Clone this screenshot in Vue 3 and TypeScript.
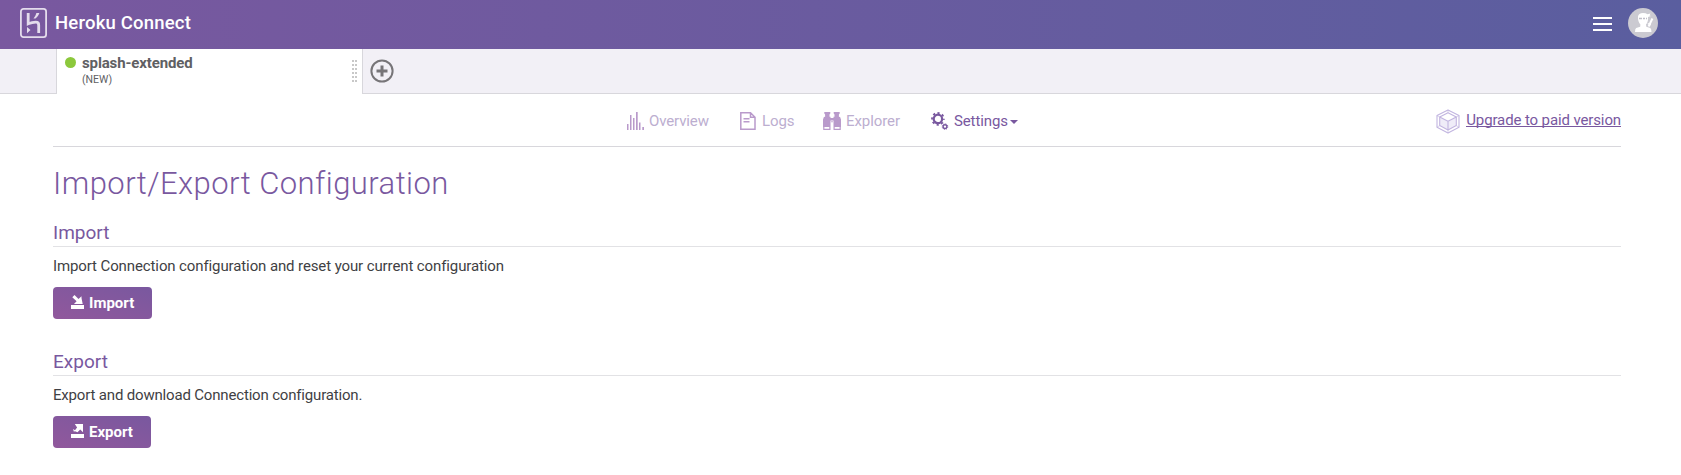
<script setup lang="ts">
interface Section {
  id: string
  title: string
  text: string
}

const sections: Section[] = [
  { id: 'import', title: 'Import', text: 'Import Connection configuration and reset your current configuration' },
  { id: 'export', title: 'Export', text: 'Export and download Connection configuration.' },
]
</script>

<template>
  <div class="page">
    <header class="topbar">
      <svg class="logo" width="27" height="30" viewBox="0 0 27 30">
        <rect x="0.9" y="0.9" width="25.2" height="28.2" rx="2.6" fill="none" stroke="#e4dcec" stroke-width="1.8" />
        <path d="M8.200 5v10.800c2.600-1.100 5.200-1.700 7.600-1.700 2.200 0 2.900 1 2.900 2.800v8.100" fill="none" stroke="#e4dcec" stroke-width="2.800" />
        <path d="M15.500 10.400c1.900-1.500 3.200-3.300 3.900-5.400h-3c-.5 1.800-1.400 3.600-2.900 5.400zM7 19v6.200l3.500-3.100z" fill="#e4dcec" />
      </svg>
      <span class="brand">Heroku Connect</span>
      <svg class="menu" width="19" height="14" viewBox="0 0 19 14" fill="#fff">
        <rect width="19" height="2" /><rect y="6" width="19" height="2" /><rect y="12" width="19" height="2" />
      </svg>
      <svg class="avatar" width="30" height="30" viewBox="0 0 30 30">
        <circle cx="15" cy="15" r="15" fill="#cbcad1" />
        <path fill="#fff" d="M10 8.500Q10.500 5 15 5q3 0 4.500 1.200L22.500 5.500l-1 2 1.500.5-3 1q.5 5-2 7.500l.3 2.200 4 1.300q1.200 1 1.200 4H7q0-3.500 1.200-4l4-1.300.2-2.200q-2.600-2.500-2.400-8z" />
        <path d="M11 10.500h8" stroke="#bfbdc8" stroke-width="1.600" stroke-dasharray="3 1 2 1" />
        <path d="M20.600 18.500l3.800-8" stroke="#fff" stroke-width="2" /><path d="M19.800 15.500l3 1.500" stroke="#fff" stroke-width="1.200" />
      </svg>
    </header>

    <div class="tabs">
      <div class="tab">
        <i class="status"></i>
        <div class="tab-label">
          <div class="tab-name">splash-extended</div>
          <div class="tab-note">(NEW)</div>
        </div>
        <div class="grip"><i v-for="n in 12" :key="n"></i></div>
      </div>
      <svg class="add" width="24" height="24" viewBox="0 0 24 24" fill="none" stroke="#777578">
        <circle cx="12" cy="12" r="10.600" stroke-width="2" />
        <path d="M12 6.500v11M6.500 12h11" stroke-width="3" />
      </svg>
    </div>

    <main class="content">
      <nav class="nav">
        <a class="item overview">
          <svg width="18" height="18" viewBox="0 0 18 18" fill="#b99acb">
            <path d="M0 12h1.500v6H0zM3 3h1.500v15H3zM6 6h1.500v12H6zM9 0h1.700v18H9zM12 10.500h1.500V18H12zM15.300 15h1.700v3h-1.700z" />
          </svg>
          <span>Overview</span>
        </a>
        <a class="item logs">
          <svg width="16" height="18" viewBox="0 0 16 18" fill="none" stroke="#b99acb" stroke-width="1.500">
            <path d="M.8.8h9.700L15 5.200v12H.8zM10.500.8v4.400H15M3.500 6.700h6M3.500 9.700h6" />
          </svg>
          <span>Logs</span>
        </a>
        <a class="item explorer">
          <svg width="18" height="18" viewBox="0 0 18 18" fill="#b99acb">
            <path d="M1.300 0h6v1.500l-.8 1v2.300H7.500V6h3V4.800h1V2.500l-.8-1V0h6v1.500l-.8 1v2.300l1.200.2.900 2.500V15h-7.500V8.500H7.500V15H0V7.500L.9 5l1.200-.2V2.500l-.8-1z" />
            <path d="M.8 15v2.300h6.100V15M11.100 15v2.300h6.100V15" fill="none" stroke="#b99acb" stroke-width="1.200" />
            <path d="M8.200 9.300h1.600v1H8.200z" />
          </svg>
          <span>Explorer</span>
        </a>
        <a class="item settings">
          <svg width="18" height="18" viewBox="0 0 18 18" fill="none" stroke="#79589f">
            <circle cx="6.900" cy="6.900" r="4.200" stroke-width="2.200" />
            <circle cx="6.900" cy="6.900" r="5.900" stroke-width="1.800" stroke-dasharray="2.200 2.434" stroke-dashoffset="1.100" />
            <circle cx="14" cy="14.600" r="1.900" stroke-width="1.400" />
            <circle cx="14" cy="14.600" r="2.800" stroke-width=".9" stroke-dasharray="1.100 1.100" />
          </svg>
          <span>Settings</span>
          <i class="caret"></i>
        </a>
        <a class="upgrade">
          <svg width="24" height="25" viewBox="0 0 24 25" fill="none" stroke="#c2b5e0" stroke-width="1.100" stroke-linejoin="round">
            <path d="M12 .9l11 5.700v11.600l-11 5.900-11-5.900V6.600z" />
            <path d="M3.700 8.100l8.300 4.100v8.700l-8.300-4.300zM20.300 8.100L12 12.200v8.700l8.300-4.300z" fill="#efecf8" />
            <path d="M3.700 8.100L12 3.800l8.300 4.300" />
            <path d="M12 .9v2.900M12 20.900v3.200M1 6.600l2.700 1.500M23 6.600l-2.700 1.500M1 18.200l2.700-1.600M23 18.200l-2.700-1.600" stroke-opacity=".5" />
          </svg>
          <span>Upgrade to paid version</span>
        </a>
      </nav>

      <h1><span>Import/Export Configuration</span></h1>

      <section v-for="s in sections" :key="s.id" :class="s.id">
        <h2><span>{{ s.title }}</span></h2>
        <p><span>{{ s.text }}</span></p>
        <button type="button">
          <svg width="13" height="14" viewBox="0 0 13 14" fill="#fff">
            <path d="M0 10h13v4H0z" />
            <path v-if="s.id === 'import'" d="M3.500 0L7.500 4 10.500 1.200V9H3l2.600-2.800L1.300 2.200zM10.500 3l1.200 6h-1.200z" />
            <path v-else d="M3.800 0H12v8.200L9.200 5.400 6.500 8.300 3.400 7l2.700-3.600zM2 5l2 1.200L3 8z" />
          </svg>
          <span>{{ s.title }}</span>
        </button>
      </section>
    </main>
  </div>
</template>

<style>
body {
  margin: 0;
  background: #fff;
}
</style>

<style scoped>
.page {
  width: 1681px;
  height: 475px;
  overflow: hidden;
  background: #fff;
  font-family: Roboto, "Liberation Sans", sans-serif;
  color: #3f3f44;
}
svg {
  display: block;
  flex: none;
}
.topbar {
  box-sizing: border-box;
  height: 49px;
  padding: 8px 23px 11px 20px;
  display: flex;
  align-items: flex-start;
  background: linear-gradient(to right, #79589f, #5a5e9f);
}
.brand {
  margin-left: 8px;
  line-height: 30px;
  font-size: 18.500px;
  font-weight: 500;
  letter-spacing: 0.200px;
  color: #fff;
}
.menu {
  margin: 9px 16px 0 auto;
}
.tabs {
  box-sizing: border-box;
  height: 45px;
  padding-left: 56px;
  display: flex;
  background: #f2f0f6;
  box-shadow: inset 0 -1px #d8d7dc;
}
.tab {
  box-sizing: border-box;
  width: 307px;
  height: 45px;
  padding: 0 5px 0 8px;
  display: flex;
  background: #fff;
  border: solid #d8d7dc;
  border-width: 0 1px;
}
.status {
  width: 11px;
  height: 11px;
  margin: 8px 6px 0 0;
  border-radius: 50%;
  background: #8cc83c;
}
.tab-label {
  color: #606063;
}
.tab-name {
  margin-top: 5px;
  line-height: 18px;
  font-size: 15px;
  font-weight: 700;
  letter-spacing: -0.130px;
}
.tab-note {
  line-height: 16px;
  font-size: 10.500px;
}
.grip {
  margin: 11px 0 0 auto;
  width: 5px;
  height: 22px;
  display: grid;
  grid-template-columns: 2px 2px;
  gap: 2px 1px;
}
.grip i {
  height: 2px;
  background: #c8c8c8;
}
.add {
  margin: 10px 0 0 7px;
}
.content {
  margin: 0 60px 0 53px;
}
.nav {
  box-sizing: border-box;
  height: 53px;
  padding-top: 15px;
  display: flex;
  align-items: flex-start;
  border-bottom: 1px solid #d8d7dc;
  font-size: 15px;
  letter-spacing: -0.120px;
}
.item {
  height: 24px;
  display: flex;
  align-items: flex-start;
  color: #bcaed0;
}
.item svg {
  margin-top: 3px;
}
.item span {
  line-height: 24px;
}
.overview {
  width: 113px;
  margin-left: 574px;
}
.overview span {
  margin-left: 4px;
}
.logs {
  width: 83px;
}
.logs span {
  margin-left: 6px;
}
.explorer {
  width: 108px;
}
.explorer span {
  margin-left: 5px;
  letter-spacing: -0.080px;
}
.settings {
  color: #79589f;
}
.settings span {
  margin-left: 5px;
}
.caret {
  margin: 11px 0 0 2px;
  border: 4px solid transparent;
  border-top-color: #79589f;
  border-bottom: 0;
}
.upgrade {
  margin-left: auto;
  display: flex;
  color: #79589f;
}
.upgrade span {
  height: 18px;
  margin-left: 6px;
  line-height: 22px;
  box-shadow: inset 0 -1px #79589f;
}
h1,
h2,
p {
  margin: 0;
  white-space: nowrap;
}
h1 {
  height: 72px;
  line-height: 74px;
  font-size: 31px;
  font-weight: 300;
  letter-spacing: 0.450px;
  color: #79589f;
}
section {
  height: 129px;
}
h2 {
  box-sizing: border-box;
  height: 28px;
  line-height: 27px;
  border-bottom: 1px solid #e2e2e5;
  font-size: 19px;
  font-weight: 400;
  color: #79589f;
}
p {
  height: 40px;
  line-height: 38px;
  font-size: 15px;
  letter-spacing: -0.110px;
}
.export p {
  letter-spacing: -0.175px;
}
button {
  height: 32px;
  padding: 0 18px;
  display: flex;
  align-items: center;
  border: 0;
  border-radius: 4px;
  background: linear-gradient(to top right, #91589c, #79589f);
  color: #fff;
  font-family: inherit;
  font-size: 15px;
  font-weight: 700;
  line-height: 32px;
}
button svg {
  margin-top: -2px;
}
button span {
  margin-left: 5px;
}
</style>
